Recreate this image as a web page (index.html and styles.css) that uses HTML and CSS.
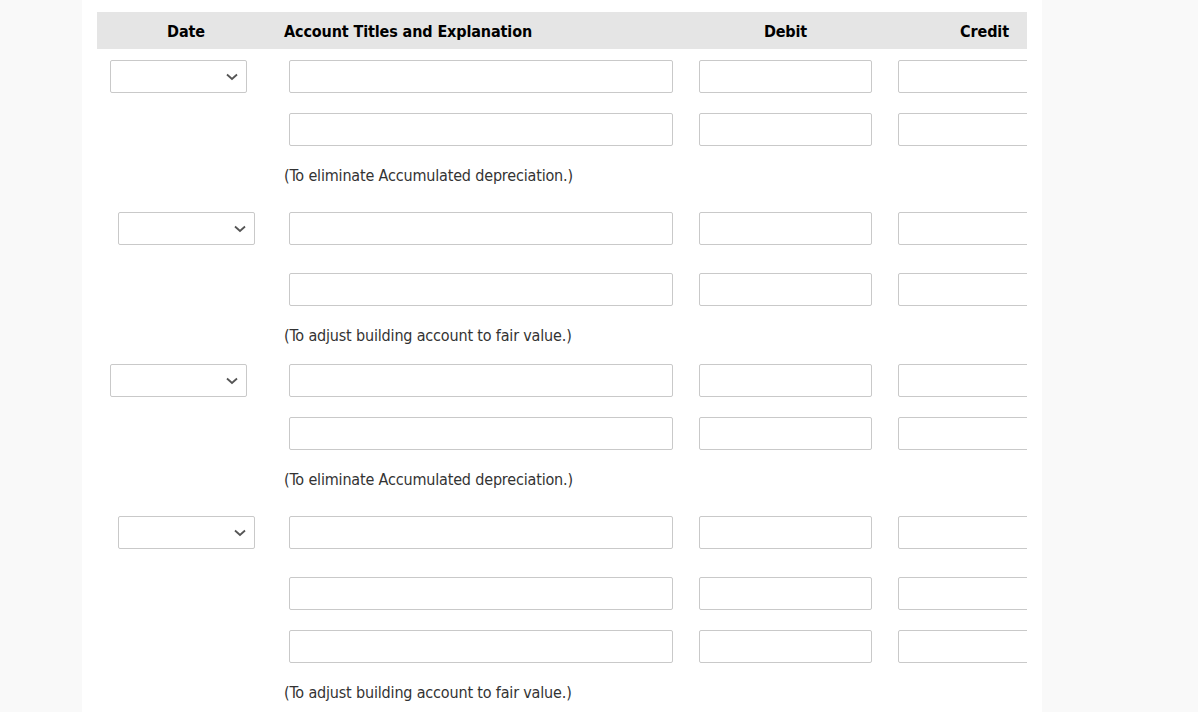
FILE: index.html
```html
<!DOCTYPE html>
<html lang="en">
<head>
<meta charset="utf-8">
<title>Journal entries</title>
<link rel="stylesheet" href="styles.css">
</head>
<body>
<main class="panel">
  <div class="sheet">
    <div class="head">
      <div class="h-date">Date</div>
      <div class="h-acct">Account Titles and Explanation</div>
      <div class="h-debit">Debit</div>
      <div class="h-credit">Credit</div>
    </div>

    <section class="block">
      <div class="row">
        <div class="c-date"><div class="select"><svg class="chev" viewBox="0 0 12 8" width="12" height="8"><path d="M1 1.5 L6 6 L11 1.5" fill="none" stroke="#555" stroke-width="1.8"/></svg></div></div>
        <div class="c-acct"><div class="input wide"></div></div>
        <div class="c-debit"><div class="input"></div></div>
        <div class="c-credit"><div class="input"></div></div>
      </div>
      <div class="row">
        <div class="c-date"></div>
        <div class="c-acct"><div class="input wide"></div></div>
        <div class="c-debit"><div class="input"></div></div>
        <div class="c-credit"><div class="input"></div></div>
      </div>
      <p class="note">(To eliminate Accumulated depreciation.)</p>
    </section>

    <section class="block alt">
      <div class="row">
        <div class="c-date"><div class="select"><svg class="chev" viewBox="0 0 12 8" width="12" height="8"><path d="M1 1.5 L6 6 L11 1.5" fill="none" stroke="#555" stroke-width="1.8"/></svg></div></div>
        <div class="c-acct"><div class="input wide"></div></div>
        <div class="c-debit"><div class="input"></div></div>
        <div class="c-credit"><div class="input"></div></div>
      </div>
      <div class="row">
        <div class="c-date"></div>
        <div class="c-acct"><div class="input wide"></div></div>
        <div class="c-debit"><div class="input"></div></div>
        <div class="c-credit"><div class="input"></div></div>
      </div>
      <p class="note">(To adjust building account to fair value.)</p>
    </section>

    <section class="block">
      <div class="row">
        <div class="c-date"><div class="select"><svg class="chev" viewBox="0 0 12 8" width="12" height="8"><path d="M1 1.5 L6 6 L11 1.5" fill="none" stroke="#555" stroke-width="1.8"/></svg></div></div>
        <div class="c-acct"><div class="input wide"></div></div>
        <div class="c-debit"><div class="input"></div></div>
        <div class="c-credit"><div class="input"></div></div>
      </div>
      <div class="row">
        <div class="c-date"></div>
        <div class="c-acct"><div class="input wide"></div></div>
        <div class="c-debit"><div class="input"></div></div>
        <div class="c-credit"><div class="input"></div></div>
      </div>
      <p class="note">(To eliminate Accumulated depreciation.)</p>
    </section>

    <section class="block alt">
      <div class="row">
        <div class="c-date"><div class="select"><svg class="chev" viewBox="0 0 12 8" width="12" height="8"><path d="M1 1.5 L6 6 L11 1.5" fill="none" stroke="#555" stroke-width="1.8"/></svg></div></div>
        <div class="c-acct"><div class="input wide"></div></div>
        <div class="c-debit"><div class="input"></div></div>
        <div class="c-credit"><div class="input"></div></div>
      </div>
      <div class="row">
        <div class="c-date"></div>
        <div class="c-acct"><div class="input wide"></div></div>
        <div class="c-debit"><div class="input"></div></div>
        <div class="c-credit"><div class="input"></div></div>
      </div>
      <div class="row">
        <div class="c-date"></div>
        <div class="c-acct"><div class="input wide"></div></div>
        <div class="c-debit"><div class="input"></div></div>
        <div class="c-credit"><div class="input"></div></div>
      </div>
      <p class="note">(To adjust building account to fair value.)</p>
    </section>
  </div>
</main>
</body>
</html>
```

FILE: styles.css
```css
html, body {
  margin: 0;
  padding: 0;
}
body {
  background: #f9f9f9;
  font-family: "DejaVu Sans Condensed", "DejaVu Sans", sans-serif;
  font-stretch: condensed;
  font-size: 16px;
  color: #333333;
  height: 712px;
  overflow: hidden;
}
.panel {
  margin-left: 82px;
  width: 960px;
  min-height: 712px;
  background: #ffffff;
  padding: 12px 0 0 15px;
  box-sizing: border-box;
}
.sheet {
  width: 930px;
  overflow: hidden;
}
.head {
  display: flex;
  height: 37px;
  box-sizing: border-box;
  padding-top: 2px;
  align-items: center;
  background: #e5e5e5;
  font-weight: bold;
  color: #000000;
  white-space: nowrap;
  margin-bottom: 11px;
  letter-spacing: -0.12px;
}
.h-date {
  width: 178px;
  padding-right: 9px;
  text-align: center;
  flex: none;
}
.h-acct {
  width: 415px;
  flex: none;
}
.h-debit {
  width: 173px;
  margin-right: 26px;
  text-align: center;
  flex: none;
}
.h-credit {
  width: 173px;
  text-align: center;
  flex: none;
}
.block.alt {
  padding-top: 8px;
}
.row {
  display: flex;
  height: 33px;
  margin-bottom: 20px;
}
.block.alt .row:first-child {
  margin-bottom: 28px;
}
.row > div {
  flex: none;
}
.c-date {
  width: 187px;
}
.c-acct {
  width: 415px;
}
.c-debit {
  width: 199px;
}
.c-credit {
  width: 173px;
}
.input, .select {
  box-sizing: border-box;
  height: 33px;
  border: 1px solid #c9c9c9;
  border-radius: 2px;
  background: #ffffff;
  width: 173px;
}
.input.wide {
  width: 384px;
  margin-left: 5px;
}
.select {
  width: 137px;
  margin-left: 13px;
  position: relative;
}
.block.alt .select {
  margin-left: 21px;
}
.chev {
  position: absolute;
  right: 8px;
  top: 12px;
}
.note {
  margin: 0 0 18px 187px;
  line-height: 20px;
  white-space: nowrap;
  letter-spacing: -0.17px;
}
```
